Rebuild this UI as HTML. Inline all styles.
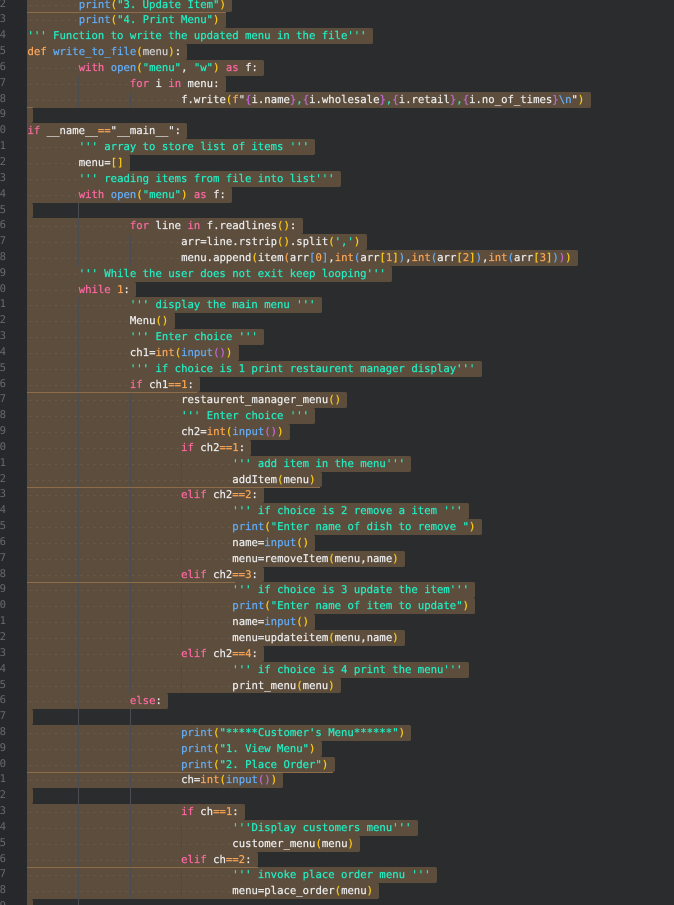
<!DOCTYPE html>
<html><head><meta charset="utf-8"><style>
html,body{margin:0;padding:0;background:#2b2c2e}
#p{position:relative;width:674px;height:905px;overflow:hidden;background:#2b2c2e;font-family:"DejaVu Sans Mono","Liberation Mono",monospace;font-size:10.63px;line-height:16px;color:#ececec;text-rendering:geometricPrecision;-webkit-text-stroke:.22px}
#g{position:absolute;left:0;top:0;width:27px;height:905px;background:#26282b}
.l{position:absolute;left:0;width:6px;overflow:hidden;color:#66696c;white-space:pre;direction:rtl;height:16px;-webkit-text-stroke:0}
.r{position:absolute;left:27px;width:fit-content;box-sizing:border-box;padding-left:.5px;padding-right:6.4px;white-space:pre;background-color:#5c4d3d;border-radius:0 2px 2px 0;background-repeat:no-repeat;background-position:0 8px;background-image:repeating-linear-gradient(90deg,transparent 0 3px,#70685e 3px 4px,transparent 4px 6.4px)}
.e{width:6px;padding:0;background-image:none}
.i1{padding-left:51.7px;background-size:51.2px 1px}
.i2{padding-left:102.9px;background-size:102.4px 1px}
.i3{padding-left:154.1px;background-size:153.6px 1px}
.i4{padding-left:205.3px;background-size:204.8px 1px}
.i0{background-size:0 0}
.c{color:#22eec4}.k{color:#ff69a3}.b{color:#62aefa}.y{color:#ffcb12}.n{color:#fca655}.u{color:#c466dc}.a{color:#cfcfcf}.d{color:#ffa95c}
.v{position:absolute;width:1px;background:#4b4b52}
.o{position:absolute;left:27px;height:1px;background:#8d6d49}
</style></head><body><div id="p"><div id="g"></div>
<div class="l" style="top:-4px">2</div><div class="l" style="top:11px">3</div><div class="l" style="top:27px">4</div><div class="l" style="top:43px">5</div><div class="l" style="top:59px">6</div><div class="l" style="top:75px">7</div><div class="l" style="top:91px">8</div><div class="l" style="top:106px">9</div><div class="l" style="top:122px">0</div><div class="l" style="top:138px">1</div><div class="l" style="top:154px">2</div><div class="l" style="top:170px">3</div><div class="l" style="top:186px">4</div><div class="l" style="top:202px">5</div><div class="l" style="top:217px">6</div><div class="l" style="top:233px">7</div><div class="l" style="top:249px">8</div><div class="l" style="top:265px">9</div><div class="l" style="top:281px">0</div><div class="l" style="top:296px">1</div><div class="l" style="top:312px">2</div><div class="l" style="top:328px">3</div><div class="l" style="top:344px">4</div><div class="l" style="top:360px">5</div><div class="l" style="top:376px">6</div><div class="l" style="top:391px">7</div><div class="l" style="top:407px">8</div><div class="l" style="top:423px">9</div><div class="l" style="top:439px">0</div><div class="l" style="top:455px">1</div><div class="l" style="top:471px">2</div><div class="l" style="top:486px">3</div><div class="l" style="top:502px">4</div><div class="l" style="top:518px">5</div><div class="l" style="top:534px">6</div><div class="l" style="top:550px">7</div><div class="l" style="top:566px">8</div><div class="l" style="top:581px">9</div><div class="l" style="top:597px">0</div><div class="l" style="top:613px">1</div><div class="l" style="top:629px">2</div><div class="l" style="top:645px">3</div><div class="l" style="top:661px">4</div><div class="l" style="top:677px">5</div><div class="l" style="top:692px">6</div><div class="l" style="top:708px">7</div><div class="l" style="top:724px">8</div><div class="l" style="top:740px">9</div><div class="l" style="top:756px">0</div><div class="l" style="top:771px">1</div><div class="l" style="top:787px">2</div><div class="l" style="top:803px">3</div><div class="l" style="top:819px">4</div><div class="l" style="top:835px">5</div><div class="l" style="top:851px">6</div><div class="l" style="top:866px">7</div><div class="l" style="top:882px">8</div><div class="l" style="top:898px">9</div>

<div class="r i1" style="top:-3px;height:15px"><span class="b">print</span><span class="y">(</span><span class="c">"3. Update Item"</span><span class="y">)</span></div>
<div class="r i1" style="top:12px;height:16px"><span class="b">print</span><span class="y">(</span><span class="c">"4. Print Menu"</span><span class="y">)</span></div>
<div class="r i0" style="top:28px;height:16px"><span class="c">''' Function to write the updated menu in the file'''</span></div>
<div class="r i0" style="top:44px;height:16px"><span class="d">def</span> <span class="b">write_to_file</span><span class="y">(</span><span class="a">menu</span><span class="y">)</span>:</div>
<div class="r i1" style="top:60px;height:16px"><span class="k">with</span> <span class="b">open</span><span class="y">(</span><span class="c">"menu"</span>, <span class="c">"w"</span><span class="y">)</span> <span class="k">as</span> f:</div>
<div class="r i2" style="top:76px;height:16px"><span class="k">for</span> i <span class="k">in</span> menu:</div>
<div class="r i3" style="top:92px;height:16px">f.write<span class="y">(</span><span class="n">f</span>"<span class="u">{</span>i.name<span class="u">}</span><span class="c">,</span><span class="u">{</span>i.wholesale<span class="u">}</span><span class="c">,</span><span class="u">{</span>i.retail<span class="u">}</span><span class="c">,</span><span class="u">{</span>i.no_of_times<span class="u">}</span><span class="b">\n</span>"<span class="y">)</span></div>
<div class="r e" style="top:108px;height:15px"></div>
<div class="r i0" style="top:123px;height:16px"><span class="k">if</span> __name__<span class="n">==</span>"__main__":</div>
<div class="r i1" style="top:139px;height:16px"><span class="c">''' array to store list of items '''</span></div>
<div class="r i1" style="top:155px;height:16px">menu=<span class="y">[]</span></div>
<div class="r i1" style="top:171px;height:16px"><span class="c">''' reading items from file into list'''</span></div>
<div class="r i1" style="top:187px;height:16px"><span class="k">with</span> <span class="b">open</span><span class="y">(</span><span class="c">"menu"</span><span class="y">)</span> <span class="k">as</span> f:</div>
<div class="r e" style="top:203px;height:15px"></div>
<div class="r i2" style="top:218px;height:16px"><span class="k">for</span> line <span class="k">in</span> f.readlines<span class="y">()</span>:</div>
<div class="r i3" style="top:234px;height:16px">arr=line.rstrip<span class="y">()</span>.split<span class="y">(</span><span class="c">','</span><span class="y">)</span></div>
<div class="r i3" style="top:250px;height:16px">menu.append<span class="y">(</span>item<span class="n">(</span>arr<span class="b">[</span><span class="n">0</span><span class="b">]</span>,<span class="n">int</span><span class="b">(</span>arr<span class="y">[</span><span class="n">1</span><span class="y">]</span><span class="b">)</span>,<span class="n">int</span><span class="b">(</span>arr<span class="y">[</span><span class="n">2</span><span class="y">]</span><span class="b">)</span>,<span class="n">int</span><span class="b">(</span>arr<span class="y">[</span><span class="n">3</span><span class="y">]</span><span class="b">)</span><span class="u">)</span><span class="y">)</span></div>
<div class="r i1" style="top:266px;height:16px"><span class="c">''' While the user does not exit keep looping'''</span></div>
<div class="r i1" style="top:282px;height:15px"><span class="k">while</span> <span class="n">1</span>:</div>
<div class="r i2" style="top:297px;height:16px"><span class="c">''' display the main menu '''</span></div>
<div class="r i2" style="top:313px;height:16px">Menu<span class="y">()</span></div>
<div class="r i2" style="top:329px;height:16px"><span class="c">''' Enter choice '''</span></div>
<div class="r i2" style="top:345px;height:16px">ch1=<span class="n">int</span><span class="y">(</span><span class="b">input</span><span class="u">()</span><span class="y">)</span></div>
<div class="r i2" style="top:361px;height:16px"><span class="c">''' if choice is 1 print restaurent manager display'''</span></div>
<div class="r i2" style="top:377px;height:15px"><span class="k">if</span> ch1<span class="n">==1</span>:</div>
<div class="r i3" style="top:392px;height:16px">restaurent_manager_menu<span class="y">()</span></div>
<div class="r i3" style="top:408px;height:16px"><span class="c">''' Enter choice '''</span></div>
<div class="r i3" style="top:424px;height:16px">ch2=<span class="n">int</span><span class="y">(</span><span class="b">input</span><span class="u">()</span><span class="y">)</span></div>
<div class="r i3" style="top:440px;height:16px"><span class="k">if</span> ch2<span class="n">==1</span>:</div>
<div class="r i4" style="top:456px;height:16px"><span class="c">''' add item in the menu'''</span></div>
<div class="r i4" style="top:472px;height:15px">addItem<span class="y">(</span>menu<span class="y">)</span></div>
<div class="r i3" style="top:487px;height:16px"><span class="k">elif</span> ch2<span class="n">==2</span>:</div>
<div class="r i4" style="top:503px;height:16px"><span class="c">''' if choice is 2 remove a item '''</span></div>
<div class="r i4" style="top:519px;height:16px"><span class="b">print</span><span class="y">(</span><span class="c">"Enter name of dish to remove "</span><span class="y">)</span></div>
<div class="r i4" style="top:535px;height:16px">name=<span class="b">input</span><span class="y">()</span></div>
<div class="r i4" style="top:551px;height:16px">menu=removeItem<span class="y">(</span>menu,name<span class="y">)</span></div>
<div class="r i3" style="top:567px;height:15px"><span class="k">elif</span> ch2<span class="n">==3</span>:</div>
<div class="r i4" style="top:582px;height:16px"><span class="c">''' if choice is 3 update the item'''</span></div>
<div class="r i4" style="top:598px;height:16px"><span class="b">print</span><span class="y">(</span><span class="c">"Enter name of item to update"</span><span class="y">)</span></div>
<div class="r i4" style="top:614px;height:16px">name=<span class="b">input</span><span class="y">()</span></div>
<div class="r i4" style="top:630px;height:16px">menu=updateitem<span class="y">(</span>menu,name<span class="y">)</span></div>
<div class="r i3" style="top:646px;height:16px"><span class="k">elif</span> ch2<span class="n">==4</span>:</div>
<div class="r i4" style="top:662px;height:16px"><span class="c">''' if choice is 4 print the menu'''</span></div>
<div class="r i4" style="top:678px;height:15px">print_menu<span class="y">(</span>menu<span class="y">)</span></div>
<div class="r i2" style="top:693px;height:16px"><span class="k">else</span>:</div>
<div class="r e" style="top:709px;height:16px"></div>
<div class="r i3" style="top:725px;height:16px"><span class="b">print</span><span class="y">(</span><span class="c">"*****Customer's Menu******"</span><span class="y">)</span></div>
<div class="r i3" style="top:741px;height:16px"><span class="b">print</span><span class="y">(</span><span class="c">"1. View Menu"</span><span class="y">)</span></div>
<div class="r i3" style="top:757px;height:15px"><span class="b">print</span><span class="y">(</span><span class="c">"2. Place Order"</span><span class="y">)</span></div>
<div class="r i3" style="top:772px;height:16px">ch=<span class="n">int</span><span class="y">(</span><span class="b">input</span><span class="u">()</span><span class="y">)</span></div>
<div class="r e" style="top:788px;height:16px"></div>
<div class="r i3" style="top:804px;height:16px"><span class="k">if</span> ch<span class="n">==1</span>:</div>
<div class="r i4" style="top:820px;height:16px"><span class="c">'''Display customers menu'''</span></div>
<div class="r i4" style="top:836px;height:16px">customer_menu<span class="y">(</span>menu<span class="y">)</span></div>
<div class="r i3" style="top:852px;height:15px"><span class="k">elif</span> ch<span class="n">==2</span>:</div>
<div class="r i4" style="top:867px;height:16px"><span class="c">''' invoke place order menu '''</span></div>
<div class="r i4" style="top:883px;height:16px">menu=place_order<span class="y">(</span>menu<span class="y">)</span></div>
<div class="r e" style="top:899px;height:16px"></div>

<div class="v" style="left:78px;top:76px;height:32px"></div>
<div class="v" style="left:130px;top:92px;height:16px"></div>
<div class="v" style="left:78px;top:203px;height:63px"></div>
<div class="v" style="left:130px;top:234px;height:32px"></div>
<div class="v" style="left:78px;top:297px;height:608px"></div>
<div class="v" style="left:130px;top:392px;height:301px"></div>
<div class="v" style="left:130px;top:709px;height:190px"></div>
<div class="v" style="left:181px;top:456px;height:31px"></div>
<div class="v" style="left:181px;top:503px;height:64px"></div>
<div class="v" style="left:181px;top:582px;height:64px"></div>
<div class="v" style="left:181px;top:662px;height:31px"></div>
<div class="v" style="left:181px;top:820px;height:32px"></div>
<div class="v" style="left:181px;top:867px;height:32px"></div>

<div class="o" style="top:12px;width:199px"></div>
<div class="o" style="top:107px;width:6px"></div>
<div class="o" style="top:392px;width:170px"></div>
<div class="o" style="top:487px;width:293px"></div>
<div class="o" style="top:582px;width:208px"></div>
<div class="o" style="top:772px;width:306px"></div>
<div class="o" style="top:867px;width:231px"></div>
</div></body></html>
